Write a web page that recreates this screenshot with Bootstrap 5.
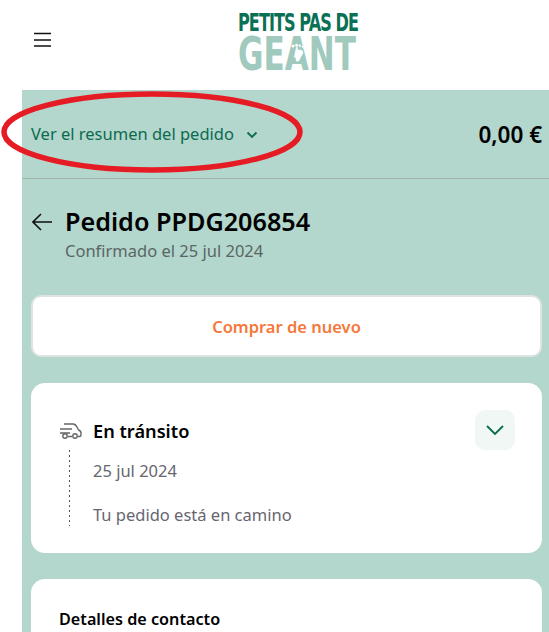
<!DOCTYPE html>
<html lang="es">
<head>
  <meta charset="UTF-8" />
  <meta name="viewport" content="width=device-width, initial-scale=1" />
  <title>Pedido PPDG206854</title>
  <link href="https://cdn.jsdelivr.net/npm/bootstrap@5.3.3/dist/css/bootstrap.min.css" rel="stylesheet" />
  <style>
    html, body { height: 632px; overflow: hidden; }
    body { font-family: "Noto Sans", "Open Sans", sans-serif; background: #fff; color: #000; position: relative; }
    .top-bar { height: 90px; padding-left: 34px; }
    .menu-icon { margin-bottom: 12px; }
    .logo-box { position: absolute; left: 238px; top: 12px; width: 120px; height: 60px; font-family: "DejaVu Sans", sans-serif; font-weight: 700; }
    .logo-a { color: #0b7155; font-size: 25px; line-height: 22px; height: 22px; letter-spacing: -1.5px; white-space: nowrap; transform: scaleX(.645); transform-origin: left top; }
    .logo-b { color: #9fcabd; font-size: 46px; line-height: 36px; height: 36px; margin-top: 2px; white-space: nowrap; transform: scaleX(.675); transform-origin: left top; }
    .logo-foot { position: absolute; left: 53px; top: 27px; }
    .main-area { margin-left: 22px; background: #b3d6cd; height: 542px; }
    .summary-bar { height: 89px; padding: 1px 7px 0 9px; border-bottom: 1px solid #a3b3ae; }
    .summary-link { color: #0b6b50; font-size: 16.5px; }
    .summary-total { font-size: 22.5px; font-weight: 600; }
    .order-head { padding: 26px 9px 0 10px; height: 116px; }
    .order-title { font-size: 25.2px; font-weight: 600; line-height: 32px; margin-bottom: 3px; }
    .order-sub { font-size: 16.5px; color: #5a6663; line-height: 22px; }
    .back-arrow { margin-right: 13px; margin-top: 8px; }
    .again-btn { height: 62px; margin: 0 7px 0 9px; background: #fff; border: 2px solid #dfe3e2; border-radius: 10px; color: #f5783a; font-size: 16.5px; font-weight: 600; padding-top: 2px; }
    .white-box { margin: 26px 7px 0 9px; background: #fff; border-radius: 14px; }
    .transit-box { height: 170px; padding: 27px 27px 0 28px; }
    .transit-head { padding-top: 9px; }
    .transit-title { font-size: 18.2px; font-weight: 600; line-height: 24px; margin-left: 3px; }
    .toggle-box { width: 40px; height: 40px; background: #f1f7f5; border-radius: 10px; }
    .transit-body { margin-left: 10px; height: 76px; padding-left: 24px; color: #66666f; font-size: 16.5px; background: repeating-linear-gradient(to bottom, #555 0 2px, transparent 2px 5px) left top / 1px 100% no-repeat; }
    .transit-body p { margin: 0; line-height: 22px; }
    .transit-date { padding-top: 10px; margin-bottom: 22px !important; }
    .contact-box { height: 200px; padding: 28px; font-size: 16.2px; font-weight: 600; }
    .red-ring { position: absolute; left: 0; top: 88px; }
  </style>
</head>
<body>

  <!-- Cabecera -->
  <header class="top-bar d-flex align-items-center">
    <svg width="17" height="15" viewBox="0 0 17 15" class="menu-icon" aria-label="Menu">
      <path d="M0 1.500h17M0 8h17M0 14h17" stroke="#111" stroke-width="1.600" fill="none" />
    </svg>
    <div class="logo-box">
      <div class="logo-a">PETITS PAS DE</div>
      <div class="logo-b">GEANT</div>
      <svg class="logo-foot" width="16" height="30" viewBox="0 0 20 28">
        <path d="M6 10c3-2 8-2 9 1 1 3-2 5-3 8-1 3-3 5-5 4-2-1-1-4 0-6 1-2-3-5-1-7z" fill="#fff" />
        <circle cx="2.500" cy="4" r="2" fill="#fff" /><circle cx="7" cy="3" r="1.700" fill="#fff" /><circle cx="11" cy="3.500" r="1.500" fill="#fff" /><circle cx="14.500" cy="5" r="1.300" fill="#fff" /><circle cx="17" cy="7.500" r="1.200" fill="#fff" />
      </svg>
    </div>
  </header>

  <main class="main-area">
    <!-- Resumen -->
    <div class="summary-bar d-flex align-items-center justify-content-between">
      <div class="summary-link d-flex align-items-center gap-2">
        <span>Ver el resumen del pedido</span>
        <svg width="12" height="8" viewBox="0 0 12 8" class="ms-1"><path d="M1.500 1.500 6 6l4.500-4.500" stroke="#0b6b50" stroke-width="1.800" fill="none" /></svg>
      </div>
      <div class="summary-total">0,00 €</div>
    </div>

    <!-- Titulo -->
    <div class="order-head d-flex">
      <svg width="20" height="18" viewBox="0 0 20 18" class="back-arrow flex-shrink-0"><path d="M20 9H1M9 1 1 9l8 8" stroke="#111" stroke-width="1.600" fill="none" /></svg>
      <div>
        <div class="order-title">Pedido PPDG206854</div>
        <div class="order-sub">Confirmado el 25 jul 2024</div>
      </div>
    </div>

    <div class="again-btn d-flex align-items-center justify-content-center">Comprar de nuevo</div>

    <!-- Estado -->
    <section class="white-box transit-box">
      <div class="d-flex justify-content-between align-items-start">
        <div class="transit-head d-flex align-items-center gap-2">
          <svg width="23" height="16" viewBox="0 0 23 16" fill="none" stroke="#666" stroke-width="1.400">
            <path d="M5 1h9c2 0 3 1 4 3l1.500 3c1.500.5 2.500 1.500 2.500 3v2c0 1-.5 1.500-1.500 1.500H19M1 6h12M1 10h10M9 13.500h4" />
            <circle cx="6" cy="13" r="2.200" /><circle cx="16" cy="13" r="2.200" />
          </svg>
          <span class="transit-title">En tránsito</span>
        </div>
        <div class="toggle-box d-flex align-items-center justify-content-center">
          <svg width="18" height="10" viewBox="0 0 18 10"><path d="M1 1l8 8 8-8" stroke="#0b6b50" stroke-width="1.800" fill="none" /></svg>
        </div>
      </div>
      <div class="transit-body">
        <p class="transit-date">25 jul 2024</p>
        <p>Tu pedido está en camino</p>
      </div>
    </section>

    <section class="white-box contact-box">Detalles de contacto</section>
  </main>

  <!-- Marca roja sobre la captura -->
  <svg class="red-ring" width="310" height="90" viewBox="0 0 310 90">
    <ellipse cx="152" cy="44" rx="148" ry="38" fill="none" stroke="#e61c24" stroke-width="5.500" />
  </svg>

  <script src="https://cdn.jsdelivr.net/npm/bootstrap@5.3.3/dist/js/bootstrap.bundle.min.js"></script>
</body>
</html>
